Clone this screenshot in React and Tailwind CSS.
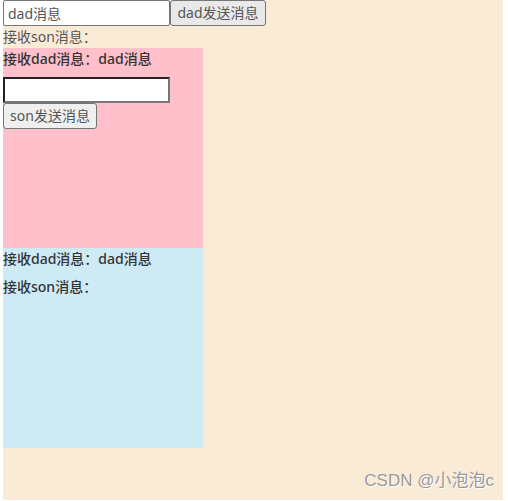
export default function App() {
  const font = { fontFamily: '"Noto Sans", "Noto Sans CJK SC", sans-serif' };
  return (
    <div className="w-[508px] h-[501px] bg-white pl-[3px] text-[14px]" style={font}>
      <div className="relative w-[500px] h-[500px] bg-[#faebd7]">
        {/* dad row */}
        <div className="flex h-[27px]">
          <input
            defaultValue="dad消息"
            className="w-[167px] h-[26px] bg-white border border-[#767676] rounded-[2px] px-[4px] text-[14px] text-[#555] outline-none"
          />
          <button className="w-[96px] h-[26px] bg-[#e9e9e9] border border-[#767676] rounded-[3px] text-[14px] text-[#555] leading-none">
            dad发送消息
          </button>
        </div>
        <div className="h-[21px] leading-[20px] text-[#555]">接收son消息：</div>

        {/* son */}
        <div className="w-[200px] h-[200px] bg-[#ffc0cb] text-[#333]">
          <div className="pt-[1px] h-[29px] leading-[20px] font-medium">接收dad消息：dad消息</div>
          <input className="block w-[167px] h-[26px] bg-white border-2 border-t-[#222] border-l-[#222] border-b-[#777] border-r-[#777] outline-none" />
          <button className="block w-[94px] h-[26px] bg-[#efefef] border border-[#767676] rounded-[3px] text-[14px] text-[#555] leading-none">
            son发送消息
          </button>
        </div>

        {/* grandson */}
        <div className="w-[200px] h-[200px] bg-[#cdeaf5] text-[#333]">
          <div className="pt-[1px] h-[29px] leading-[20px] font-medium">接收dad消息：dad消息</div>
          <div className="leading-[20px] font-medium">接收son消息：</div>
        </div>

        <div
          className="absolute right-[9px] bottom-[7px] text-[17px] text-[#999] [text-shadow:1px_1px_0_#ffffff]"
          style={{ fontFamily: '"Liberation Sans", "Noto Sans CJK SC", sans-serif' }}
        >
          CSDN @小泡泡c
        </div>
      </div>
    </div>
  );
}
